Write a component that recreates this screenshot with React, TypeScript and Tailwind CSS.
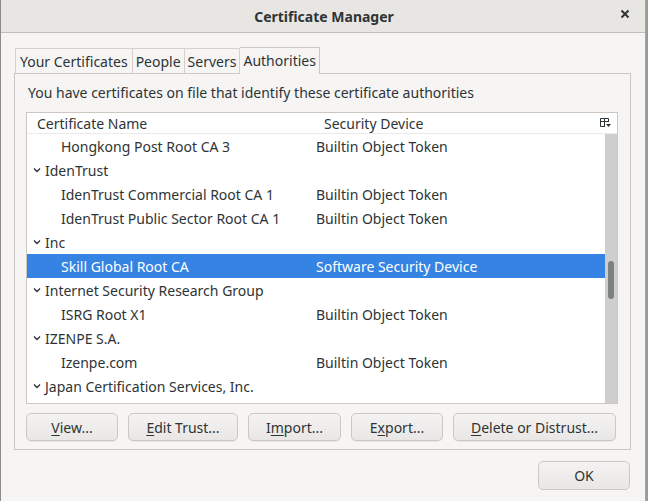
import React from "react";

const font = { fontFamily: '"Noto Sans", "Open Sans", sans-serif' };

type Row = { name: string; device?: string; parent?: boolean; selected?: boolean };

const rows: Row[] = [
  { name: "Hongkong Post Root CA 3", device: "Builtin Object Token" },
  { name: "IdenTrust", parent: true },
  { name: "IdenTrust Commercial Root CA 1", device: "Builtin Object Token" },
  { name: "IdenTrust Public Sector Root CA 1", device: "Builtin Object Token" },
  { name: "Inc", parent: true },
  { name: "Skill Global Root CA", device: "Software Security Device", selected: true },
  { name: "Internet Security Research Group", parent: true },
  { name: "ISRG Root X1", device: "Builtin Object Token" },
  { name: "IZENPE S.A.", parent: true },
  { name: "Izenpe.com", device: "Builtin Object Token" },
  { name: "Japan Certification Services, Inc.", parent: true },
];

function Chevron() {
  return (
    <svg width="8" height="6" viewBox="0 0 8 6" className="mr-[4px] shrink-0">
      <path d="M1 1.5 L4 4.5 L7 1.5" fill="none" stroke="#2e3436" strokeWidth="1.4" />
    </svg>
  );
}

function Btn({ pre, u, post, w }: { pre: string; u: string; post: string; w: string }) {
  return (
    <div
      className={`${w} h-[28px] flex items-center justify-center rounded-[5px] border border-[#cdc7c2] bg-gradient-to-b from-[#f4f3f2] to-[#e9e7e5] text-[14px] text-[#2e3436] shadow-[0_1px_0_rgba(0,0,0,0.05)]`}
    >
      <span>
        {pre}
        <span className="underline underline-offset-2">{u}</span>
        {post}
      </span>
    </div>
  );
}

export default function App() {
  return (
    <div className="w-[648px] h-[501px] bg-[#9a9a9a] flex" style={font}>
      <div className="w-[646px] h-[501px] bg-[#f6f5f4] border-r border-[#a8a6a4] border-l border-l-[#8e8c8a] flex flex-col text-[#2e3436]">
        {/* title bar */}
        <div className="h-[33px] shrink-0 bg-[#e8e6e3] border-b border-[#c0bdba] flex items-center relative">
          <div className="flex-1 text-center font-bold text-[14px] pl-[2px]">Certificate Manager</div>
          <div className="absolute right-[14px] top-[8px]">
            <svg width="12" height="12" viewBox="0 0 12 12">
              <path d="M2.5 2.5 L9.5 9.5 M9.5 2.5 L2.5 9.5" stroke="#2e3436" strokeWidth="2" />
            </svg>
          </div>
        </div>

        <div className="flex-1 flex flex-col px-[13px] pt-[13px]">
          {/* tabs */}
          <div className="flex items-end h-[27px] pl-[1px]">
            <div className="h-[25px] px-[4px] flex items-center border border-[#d5d0cc] border-b-0 text-[14px] bg-[#f6f5f4]">Your Certificates</div>
            <div className="h-[25px] px-[3px] flex items-center border border-[#d5d0cc] border-b-0 border-l-0 text-[14px]">People</div>
            <div className="h-[25px] px-[3px] flex items-center border border-[#d5d0cc] border-b-0 border-l-0 text-[14px]">Servers</div>
            <div className="h-[27px] px-[3px] flex items-center border border-[#cdc7c2] border-b-0 border-l-0 text-[14px] bg-[#f6f5f4] relative top-[1px] pb-[2px]">Authorities</div>
          </div>

          {/* panel */}
          <div className="w-[617px] h-[377px] border border-[#cdc7c2] flex flex-col px-[11px]">
            <div className="h-[38px] flex items-center text-[14px] pb-[2px] pl-[2px]">
              You have certificates on file that identify these certificate authorities
            </div>

            {/* tree */}
            <div className="w-[592px] h-[292px] bg-white border border-[#cdc7c2] flex flex-col">
              <div className="h-[21px] shrink-0 flex items-center border-b border-[#ebebeb] text-[14px] relative">
                <div className="w-[286px] pl-[10px]">Certificate Name</div>
                <div className="flex-1 pl-[11px]">Security Device</div>
                <div className="w-[24px] flex items-center justify-center">
                  <svg width="11" height="10" viewBox="0 0 11 10">
                    <path d="M0.5 0.5 H8.5 V4 M0.5 0.5 V8.5 H5 M0.5 3.5 H8.5 M4.5 0.5 V8.5" fill="none" stroke="#2e3436" strokeWidth="1" />
                    <path d="M6 6 H11 L8.5 9 Z" fill="#2e3436" />
                  </svg>
                </div>
              </div>
              <div className="flex-1 flex min-h-0">
                <div className="flex-1 flex flex-col overflow-hidden">
                  {rows.map((r, i) => (
                    <div
                      key={i}
                      className={`h-[24px] shrink-0 flex items-center text-[14px] ${r.selected ? "bg-[#3584e4] text-white" : ""}`}
                    >
                      {r.parent ? (
                        <div className="flex items-center pl-[6px]">
                          <Chevron />
                          <span>{r.name}</span>
                        </div>
                      ) : (
                        <>
                          <div className="w-[289px] pl-[34px] whitespace-nowrap">{r.name}</div>
                          <div className="flex-1 whitespace-nowrap">{r.device}</div>
                        </>
                      )}
                    </div>
                  ))}
                </div>
                <div className="w-[12px] bg-[#cecece] flex flex-col items-center pt-[127px]">
                  <div className="w-[6px] h-[38px] rounded-full bg-[#7e8080]"></div>
                </div>
              </div>
            </div>

            {/* buttons */}
            <div className="flex mt-[9px] gap-[10px]">
              <Btn w="w-[92px]" pre="" u="V" post="iew..." />
              <Btn w="w-[110px]" pre="" u="E" post="dit Trust..." />
              <Btn w="w-[93px]" pre="I" u="m" post="port..." />
              <Btn w="w-[92px]" pre="E" u="x" post="port..." />
              <Btn w="w-[163px]" pre="" u="D" post="elete or Distrust..." />
            </div>
          </div>

          <div className="flex justify-end mt-[11px] pr-[2px]">
            <div className="w-[92px] h-[29px] flex items-center justify-center rounded-[5px] border border-[#cdc7c2] bg-gradient-to-b from-[#f4f3f2] to-[#e9e7e5] text-[14px]">
              OK
            </div>
          </div>
        </div>
      </div>
    </div>
  );
}
